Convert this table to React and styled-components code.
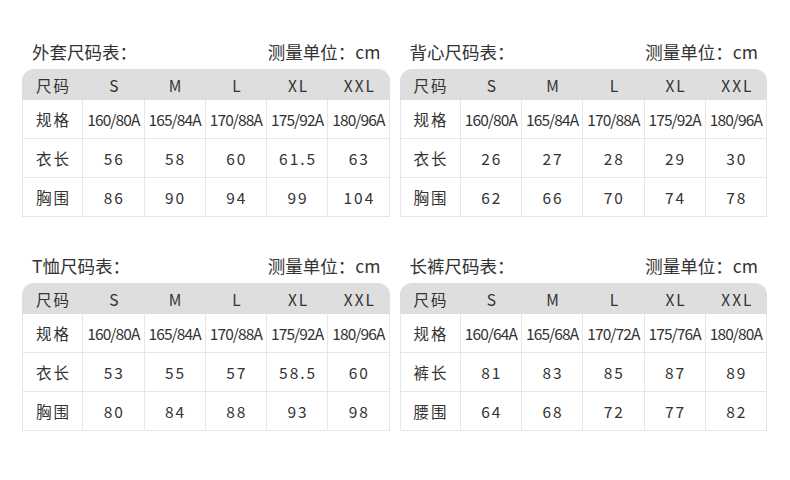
import React from "react";
import styled, { createGlobalStyle } from "styled-components";

const GlobalStyle = createGlobalStyle`
  html, body {
    margin: 0;
    padding: 0;
    background: #ffffff;
  }
  body {
    font-family: "Noto Sans CJK SC", "Noto Sans", sans-serif;
    color: #333333;
  }
`;

const Page = styled.div`
  width: 790px;
  height: 480px;
  box-sizing: border-box;
  padding: 38px 23px 0 22px;
  display: grid;
  grid-template-columns: 1fr 1fr;
  column-gap: 10px;
  row-gap: 35px;
  align-content: start;
`;

const Section = styled.div`
  display: flex;
  flex-direction: column;
  gap: 4px;
`;

const TitleBar = styled.div`
  display: flex;
  justify-content: space-between;
  align-items: center;
  height: 27px;
  padding: 0 9px 0 10px;
  font-size: 17.5px;
  color: #333333;
`;

const Table = styled.div`
  display: grid;
  grid-template-columns: repeat(6, 1fr);
  border-radius: 12px 12px 0 0;
  overflow: hidden;
`;

const HeadCell = styled.div`
  height: 31px;
  display: flex;
  align-items: center;
  justify-content: center;
  background: #dedede;
  font-size: 15.5px;
  letter-spacing: 2px;
  padding-left: 2px;
  color: #333333;
`;

const Cell = styled.div`
  height: 38px;
  display: flex;
  align-items: center;
  justify-content: center;
  border-right: 1px solid #e6e6e6;
  border-bottom: 1px solid #e6e6e6;
  border-left: ${({ $first }) => ($first ? "1px solid #e6e6e6" : "none")};
  font-size: 15.5px;
  letter-spacing: ${({ $tight }) => ($tight ? "-0.9px" : "2px")};
  padding-left: ${({ $tight }) => ($tight ? "0" : "2px")};
  white-space: nowrap;
  color: #333333;
`;

const sizes = ["S", "M", "L", "XL", "XXL"];

const charts = [
  {
    name: "外套尺码表：",
    rows: [
      ["规格", "160/80A", "165/84A", "170/88A", "175/92A", "180/96A"],
      ["衣长", "56", "58", "60", "61.5", "63"],
      ["胸围", "86", "90", "94", "99", "104"],
    ],
  },
  {
    name: "背心尺码表：",
    rows: [
      ["规格", "160/80A", "165/84A", "170/88A", "175/92A", "180/96A"],
      ["衣长", "26", "27", "28", "29", "30"],
      ["胸围", "62", "66", "70", "74", "78"],
    ],
  },
  {
    name: "T恤尺码表：",
    rows: [
      ["规格", "160/80A", "165/84A", "170/88A", "175/92A", "180/96A"],
      ["衣长", "53", "55", "57", "58.5", "60"],
      ["胸围", "80", "84", "88", "93", "98"],
    ],
  },
  {
    name: "长裤尺码表：",
    rows: [
      ["规格", "160/64A", "165/68A", "170/72A", "175/76A", "180/80A"],
      ["裤长", "81", "83", "85", "87", "89"],
      ["腰围", "64", "68", "72", "77", "82"],
    ],
  },
];

const SizeChart = ({ chart }) => (
  <Section>
    <TitleBar>
      <span>{chart.name}</span>
      <span>测量单位：cm</span>
    </TitleBar>
    <Table>
      <HeadCell>尺码</HeadCell>
      {sizes.map((s) => (
        <HeadCell key={s}>{s}</HeadCell>
      ))}
      {chart.rows.map((row, ri) =>
        row.map((v, ci) => (
          <Cell
            key={`${ri}-${ci}`}
            $first={ci === 0}
            $tight={ri === 0 && ci > 0}
          >
            {v}
          </Cell>
        ))
      )}
    </Table>
  </Section>
);

export default function App() {
  return (
    <>
      <GlobalStyle />
      <Page>
        {charts.map((c) => (
          <SizeChart key={c.name} chart={c} />
        ))}
      </Page>
    </>
  );
}
